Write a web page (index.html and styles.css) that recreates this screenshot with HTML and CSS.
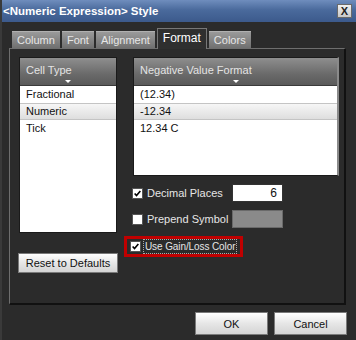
FILE: index.html
```html
<!DOCTYPE html>
<html lang="en">
<head>
    <meta charset="UTF-8">
    <title>Numeric Expression Style</title>
    <link rel="stylesheet" href="styles.css">
</head>
<body>
    <div class="window">
        <div class="titlebar">
            <span class="title">&lt;Numeric Expression&gt; Style</span>
            <span class="close">X</span>
        </div>

        <div class="tabs">
            <span class="tab">Column</span>
            <span class="tab">Font</span>
            <span class="tab">Alignment</span>
            <span class="tab active">Format</span>
            <span class="tab">Colors</span>
        </div>

        <div class="panel">
            <div class="left-col">
                <div class="list cell-list">
                    <div class="list-head">Cell Type<span class="arrow"></span></div>
                    <div class="item">Fractional</div>
                    <div class="item selected">Numeric</div>
                    <div class="item">Tick</div>
                </div>
                <button class="btn reset">Reset to Defaults</button>
            </div>

            <div class="right-col">
                <div class="list fmt-list">
                    <div class="list-head">Negative Value Format<span class="arrow"></span></div>
                    <div class="item">(12.34)</div>
                    <div class="item selected">-12.34</div>
                    <div class="item">12.34 C</div>
                </div>

                <div class="option">
                    <span class="check on"><svg viewBox="0 0 11 11"><path d="M2 5.5 L4.3 8 L9 2.5" /></svg></span>
                    <span class="opt-label">Decimal Places</span>
                    <span class="field">6</span>
                </div>
                <div class="option">
                    <span class="check"></span>
                    <span class="opt-label">Prepend Symbol</span>
                    <span class="field disabled"></span>
                </div>
                <div class="option highlight">
                    <span class="check on"><svg viewBox="0 0 11 11"><path d="M2 5.5 L4.3 8 L9 2.5" /></svg></span>
                    <span class="opt-label focus">Use Gain/Loss Color</span>
                </div>
            </div>
        </div>

        <div class="footer">
            <button class="btn">OK</button>
            <button class="btn">Cancel</button>
        </div>
    </div>
</body>
</html>
```

FILE: styles.css
```css
body { margin: 0; background: #2b2b2b; font-family: "Liberation Sans", Arial, sans-serif; font-size: 11px; }
.window { width: 356px; height: 340px; background: #2b2b2b; box-sizing: border-box; border-left: 2px solid #3a3a3a; overflow: hidden; }

.titlebar { height: 22px; display: flex; align-items: center; justify-content: space-between; padding: 0 4px 0 3px; margin-left: -2px; background: linear-gradient(#6f8dbd, #4a6a9c 45%, #3c5a8c); }
.title { color: #fff; font-weight: bold; font-size: 11.5px; }
.close { width: 13px; height: 12px; background: linear-gradient(#f0f0f0, #c8c8c8); border: 1px solid #6a6a6a; color: #222; font-weight: bold; font-size: 11px; line-height: 12px; text-align: center; }

.tabs { display: flex; align-items: flex-end; gap: 2px; height: 20px; padding: 6px 0 0 10px; }
.tab { height: 16px; line-height: 16px; padding: 0 5px; background: linear-gradient(#9a9a9a, #707070); border-top: 1px solid #b0b0b0; color: #e6e6e6; }
.tab.active { height: 20px; line-height: 19px; background: #2f2f2f; border: 1px solid #777; border-bottom: none; color: #fff; font-size: 12px; position: relative; top: 1px; }

.panel { display: flex; margin-left: 7px; width: 337px; height: 257px; box-sizing: border-box; border-top: 1px solid #6e6e6e; border-left: 1px solid #6e6e6e; border-right: 2px solid #111; border-bottom: 2px solid #111; padding: 8px 0 0 9px; }

.list { background: #fff; border: 1px solid #1a1a1a; box-sizing: border-box; }
.cell-list { width: 98px; height: 176px; }
.fmt-list { width: 206px; height: 119px; border-right: 2px solid #8a8a8a; }
.list-head { position: relative; height: 27px; line-height: 24px; padding-left: 6px; color: #e4e4e4; background: linear-gradient(#8e8e8e, #6a6a6a 60%, #5a5a5a); border-bottom: 1px solid #3a3a3a; }
.arrow { position: absolute; left: 50%; bottom: 2px; margin-left: -3px; border: 3px solid transparent; border-top: 3px solid #fff; border-bottom: none; }
.item { height: 17px; line-height: 17px; padding-left: 6px; color: #111; }
.item.selected { background: linear-gradient(#f6f6f6, #dedede); border-top: 1px solid #c4c4c4; border-bottom: 1px solid #c4c4c4; height: 15px; line-height: 15px; }

.left-col { display: flex; flex-direction: column; }
.right-col { margin-left: 15px; display: flex; flex-direction: column; }

.btn { height: 21px; padding: 0; border: 1px solid #7a7a7a; background: linear-gradient(#ffffff, #e6e6e6 50%, #d4d4d4); color: #111; font-family: "Liberation Sans", Arial, sans-serif; font-size: 11px; }
.reset { width: 100px; height: 20px; margin: 20px 0 0 -1px; }

.option { display: flex; align-items: center; height: 18px; margin-top: 8px; color: #e6e6e6; }
.option:first-of-type { margin-top: 6px; }
.check { flex: none; width: 11px; height: 11px; box-sizing: border-box; background: #fff; border: 1px solid #555; margin-left: -1px; }
.check svg { display: block; width: 9px; height: 9px; }
.check svg path { fill: none; stroke: #000; stroke-width: 2; }
.opt-label { margin-left: 4px; width: 85px; white-space: nowrap; }
.field { width: 51px; height: 18px; box-sizing: border-box; background: #fff; border: 1px solid #333; color: #111; text-align: right; padding-right: 5px; line-height: 16px; font-size: 12px; }
.field.disabled { background: #8a8a8a; border-color: #6a6a6a; }
.option.highlight { width: 119px; height: 21px; box-sizing: border-box; border: 3px solid #c00000; margin-left: -9px; margin-top: 8px; padding-left: 4px; }
.opt-label.focus { width: auto; border: 1px dotted #aaa; padding: 0 1px; margin-left: 2px; line-height: 13px; font-size: 10px; letter-spacing: -0.1px; }

.footer { display: flex; justify-content: flex-end; gap: 6px; padding: 7px 9px 0 0; }
.footer .btn { width: 73px; height: 23px; }
```
